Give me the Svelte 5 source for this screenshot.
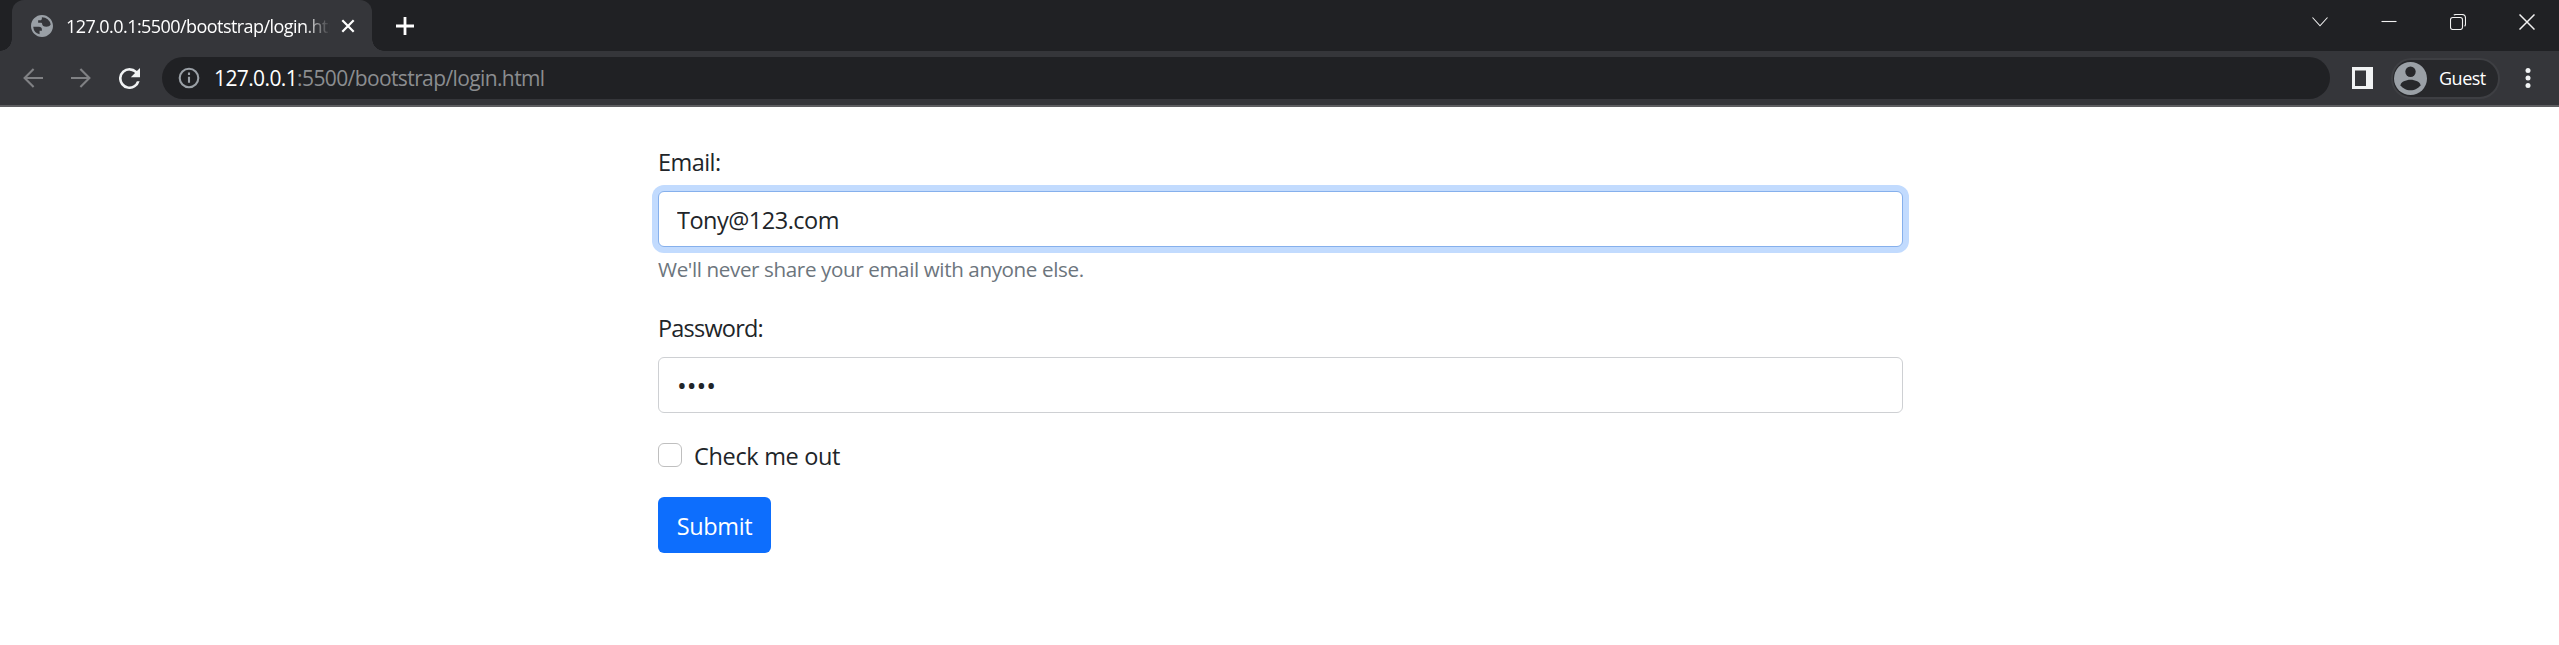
<script>
  let email = $state('Tony@123.com');
  let password = $state('1234');
  let remember = $state(false);
</script>

<div class="browser">
  <header class="titlebar">
    <div class="tab">
      <svg class="globe" viewBox="2 2 20 20"><path d="M12 2C6.48 2 2 6.48 2 12s4.48 10 10 10 10-4.48 10-10S17.52 2 12 2zM4 12.6h5.2c1.8 0 2.7.9 2.7 2.5v1.3H9.8v3.2A8 8 0 0 1 4 12.6zm15.9-1.9c-.8 1.5-2.2 1.9-3.9 1.9-2.4 0-3.9-.9-3.9-2.6 0-.8-.5-1-1.4-1H8.5V6.8h1.7c1.2 0 1.7-.6 1.7-1.6V4a8 8 0 0 1 8 6.7z" /></svg>
      <span class="tab-title">127.0.0.1:5500/bootstrap/login.html</span>
      <svg class="tab-close" viewBox="0 0 14 14"><path d="M1.3 1.3l11.4 11.4M12.7 1.3L1.3 12.7" /></svg>
    </div>
    <svg class="new-tab" viewBox="0 0 18 18"><path d="M9 0v18M0 9h18" /></svg>
    <div class="window-controls">
      <svg viewBox="0 0 16 16"><path d="M.5 3.5L8 11.8l7.5-8.3" /></svg>
      <svg viewBox="0 0 16 16"><path d="M.5 7.5h15" /></svg>
      <svg viewBox="0 0 16 16"><rect x=".5" y="3.5" width="12" height="12" rx="2.2" /><path d="M3.8 1.2Q4.5.5 6 .5h5.8Q15.5.5 15.5 4.2V10q0 1.6-.9 2.2" /></svg>
      <svg viewBox="0 0 16 16"><path d="M.5.5l15 15M15.5.5l-15 15" stroke-width="1.5" /></svg>
    </div>
  </header>

  <nav class="toolbar">
    <svg class="arrow" viewBox="0 0 20 20"><path d="M20 10H1.6M10.6 1L1.6 10l9 9" /></svg>
    <svg class="arrow" viewBox="0 0 20 20"><path d="M0 10h18.4M9.4 1l9 9-9 9" /></svg>
    <svg class="reload" viewBox="4 4 16 16"><path d="M17.65 6.35A7.96 7.96 0 0 0 12 4a8 8 0 1 0 7.73 10h-2.08A6 6 0 1 1 12 6c1.66 0 3.14.69 4.22 1.78L13 11h7V4l-2.35 2.35z" /></svg>
    <div class="address">
      <svg viewBox="0 0 22 22"><circle cx="11" cy="11" r="9.3" /><path d="M11 9.8v6M11 5.6v2.3" /></svg>
      <span class="url"><b>127.0.0.1</b>:5500/bootstrap/login.html</span>
    </div>
    <svg class="panel" viewBox="0 0 21 22"><path fill-rule="evenodd" d="M0 0h21v22H0zM3 3.5v15.5h11V3.5z" /></svg>
    <div class="profile">
      <svg viewBox="0 0 33 33"><circle cx="16.5" cy="16.5" r="16.5" fill="#9aa0a6" /><circle cx="16.5" cy="9.8" r="5.2" fill="#27282b" /><path d="M6.5 23.3c0-3.2 5.5-5.5 10-5.5s10 2.3 10 5.5c-1.8 2.9-5.6 5-10 5s-8.2-2.1-10-5z" fill="#27282b" /></svg>
      <span>Guest</span>
    </div>
    <svg class="menu" viewBox="0 0 6 22"><circle cx="3" cy="3.5" r="2.5" /><circle cx="3" cy="11" r="2.5" /><circle cx="3" cy="18.5" r="2.5" /></svg>
  </nav>

  <main>
    <form onsubmit={(e) => e.preventDefault()}>
      <label class="label" for="email">Email:</label>
      <input id="email" class="control focused" type="text" bind:value={email} />
      <p class="hint">We'll never share your email with anyone else.</p>
      <label class="label second" for="password">Password:</label>
      <input id="password" class="control password" type="password" bind:value={password} />
      <div class="check">
        <input id="remember" type="checkbox" bind:checked={remember} />
        <label for="remember">Check me out</label>
      </div>
      <button type="submit">Submit</button>
    </form>
  </main>
</div>

<style>
  :global(body) { margin: 0; background: #fff; }

  .browser {
    height: 645px;
    overflow: hidden;
    background: #fff;
    color: #212529;
    font-family: "Open Sans", "Noto Sans", sans-serif;
  }
  .browser * { box-sizing: border-box; }
  svg { display: block; flex: none; }

  .titlebar {
    display: flex;
    align-items: flex-start;
    height: 51px;
    padding-left: 12px;
    background: #202124;
  }
  .tab {
    position: relative;
    display: flex;
    align-items: center;
    width: 360px;
    height: 51px;
    padding-left: 19px;
    border-radius: 12px 12px 0 0;
    background: #35363a;
  }
  .tab::before, .tab::after {
    content: "";
    position: absolute;
    bottom: 0;
    width: 12px;
    height: 12px;
  }
  .tab::before { left: -12px; background: radial-gradient(circle at 0 0, #202124 11.5px, #35363a 12px); }
  .tab::after { right: -12px; background: radial-gradient(circle at 100% 0, #202124 11.5px, #35363a 12px); }
  .globe { width: 22px; height: 22px; fill: #9aa0a6; }
  .tab-title {
    width: 264px;
    margin-left: 13px;
    margin-right: 1px;
    overflow: hidden;
    white-space: nowrap;
    line-height: 50px;
    font-size: 18px;
    letter-spacing: -0.56px;
    color: #fff;
    mask-image: linear-gradient(to right, #000 238px, transparent 264px);
  }
  .tab-close { width: 14px; height: 14px; margin-left: 10px; stroke: #fff; stroke-width: 2.2; }
  .new-tab { width: 18px; height: 18px; margin: 17px 0 0 24px; stroke: #fff; stroke-width: 2.8; }
  .window-controls { display: flex; gap: 53px; margin: 14px 24px 0 auto; }
  .window-controls svg { width: 16px; height: 16px; fill: none; stroke: #f1f1f1; stroke-width: 1.1; }

  .toolbar {
    display: flex;
    align-items: center;
    height: 56px;
    padding: 0 28px 0 23px;
    border-bottom: 2px solid #5e5e61;
    background: #35363a;
  }
  .arrow { width: 20px; height: 20px; margin-right: 28px; fill: none; stroke: #808184; stroke-width: 2.1; }
  .reload { width: 21px; height: 21px; fill: #f1f3f4; }
  .address {
    display: flex;
    align-items: center;
    width: 2168px;
    height: 42px;
    margin-left: 22px;
    padding-left: 16px;
    border-radius: 21px;
    background: #202124;
  }
  .address svg { width: 22px; height: 22px; fill: none; stroke: #9aa0a6; stroke-width: 2.1; }
  .url { margin-left: 14px; white-space: nowrap; line-height: 42px; font-size: 21px; letter-spacing: -0.61px; color: #8b8d90; }
  .url b { font-weight: 400; color: #fff; }
  .panel { width: 21px; height: 22px; margin-left: 22px; fill: #f1f3f4; }
  .profile {
    display: flex;
    align-items: center;
    width: 109px;
    height: 41px;
    margin-left: 18px;
    padding-left: 1px;
    border: 2px solid #3e3f43;
    border-radius: 21px;
    background: #27282b;
  }
  .profile svg { width: 33px; height: 33px; }
  .profile span { margin-left: 12px; line-height: 36px; font-size: 18px; letter-spacing: -0.5px; color: #fff; }
  .menu { width: 6px; height: 22px; margin-left: auto; fill: #f1f3f4; }

  form { display: flex; flex-direction: column; align-items: flex-start; width: 1245px; margin: 0 0 0 658px; padding-top: 37px; }
  .label { height: 47px; line-height: 36px; font-size: 23.5px; letter-spacing: -0.55px; }
  .second { letter-spacing: -0.8px; }
  .control {
    width: 1245px;
    height: 56px;
    padding: 2px 18px 0;
    border: 1px solid #ced0d3;
    border-radius: 6px;
    outline: none;
    background: #fff;
    color: #212529;
    font: 23.5px "Open Sans", "Noto Sans", sans-serif;
    letter-spacing: -0.5px;
  }
  .focused { border-color: #86b0ec; box-shadow: 0 0 0 6px #c2dbfe; }
  .hint { height: 63px; margin: 0; padding-top: 6px; line-height: 32px; font-size: 20.6px; letter-spacing: -0.38px; color: #6c757d; }
  .password { padding-top: 0; font-size: 26px; letter-spacing: 0; }
  .check { display: flex; align-items: center; height: 36px; margin: 25px 0 23px; }
  .check input {
    appearance: none;
    width: 24px;
    height: 24px;
    margin: 0 12px 2px 0;
    border: 1px solid #bfbfbf;
    border-radius: 6px;
    background: #fff;
  }
  .check label { line-height: 36px; font-size: 23.5px; letter-spacing: -0.33px; }
  button {
    width: 113px;
    height: 56px;
    padding: 2px 0 0;
    border: 0;
    border-radius: 6px;
    background: #0d6efd;
    color: #fff;
    font: 23.5px "Open Sans", "Noto Sans", sans-serif;
    letter-spacing: -0.4px;
  }
</style>
